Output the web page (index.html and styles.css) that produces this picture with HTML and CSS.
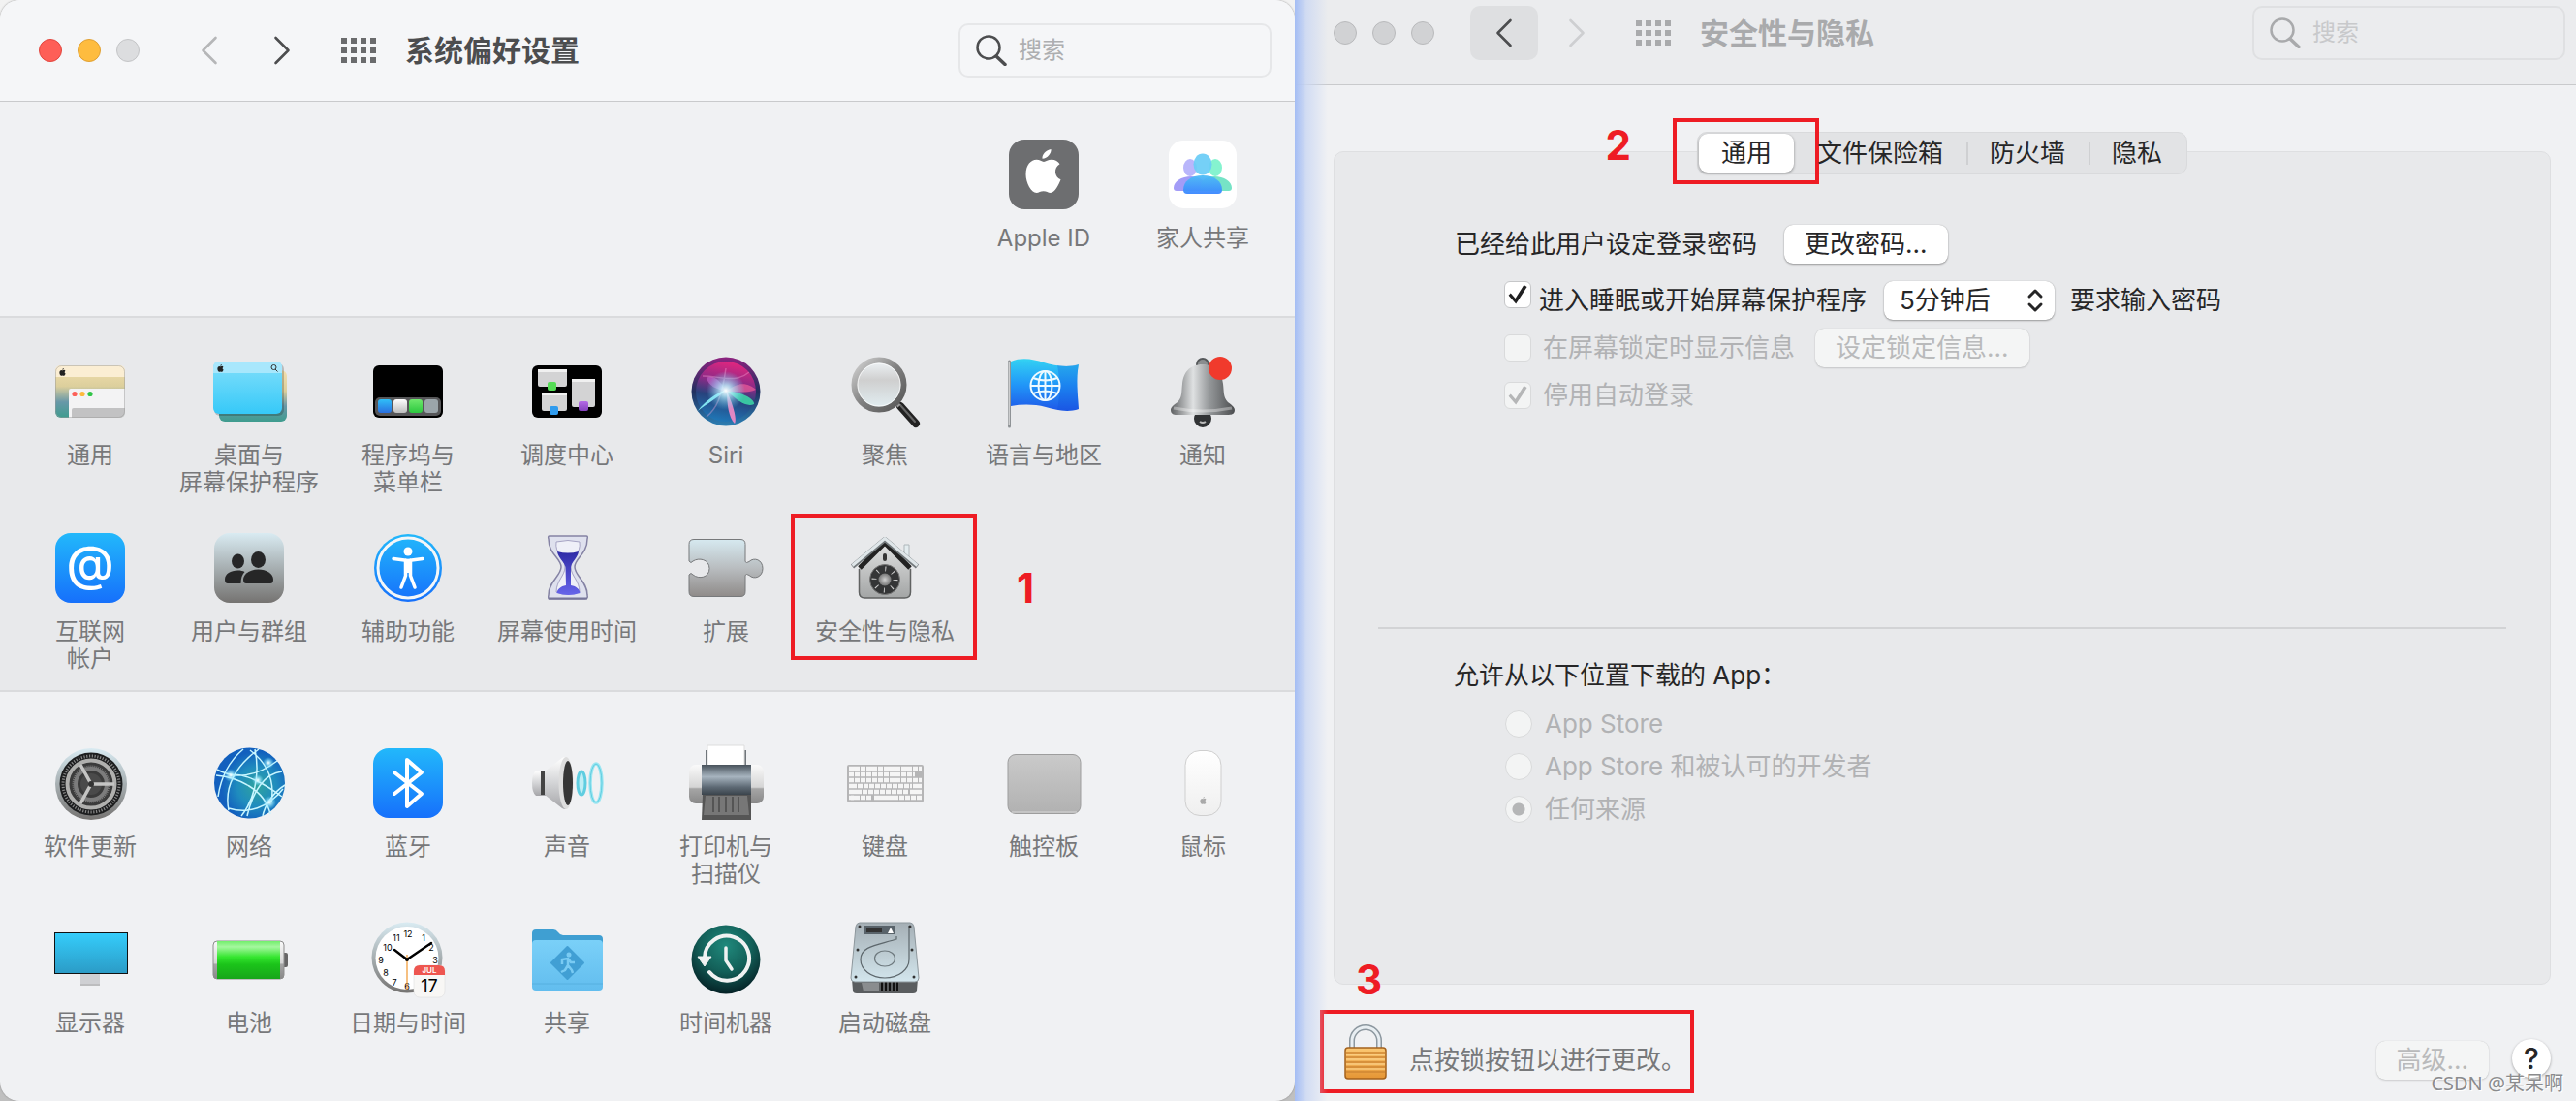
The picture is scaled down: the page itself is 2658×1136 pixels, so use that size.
FILE: index.html
```html
<!DOCTYPE html>
<html lang="zh-CN">
<head>
<meta charset="utf-8">
<meta name="viewport" content="width=device-width, initial-scale=1">
<title>系统偏好设置</title>
<link rel="stylesheet" href="styles.css">
</head>
<body>
<svg class="defs" width="0" height="0" aria-hidden="true">
  <defs>
    <linearGradient id="blue" x2="0" y2="1"><stop stop-color="#22b8fb"/><stop offset="1" stop-color="#1670fb"/></linearGradient>
    <linearGradient id="steel" x2="0" y2="1"><stop stop-color="#d9ebf2"/><stop offset="1" stop-color="#757371"/></linearGradient>
    <linearGradient id="puzzle" x2="0" y2="1"><stop stop-color="#d6e9f0"/><stop offset=".5" stop-color="#b9bdc0"/><stop offset="1" stop-color="#8f8b89"/></linearGradient>
    <linearGradient id="dune" x2="0" y2="1"><stop stop-color="#f3dfae"/><stop offset=".4" stop-color="#dccf9c"/><stop offset=".7" stop-color="#6898a8"/><stop offset="1" stop-color="#3e9c8e"/></linearGradient>
    <linearGradient id="sky" x2="0" y2="1"><stop stop-color="#82dffb"/><stop offset="1" stop-color="#36c9f8"/></linearGradient>
    <linearGradient id="dockblue" x2="0" y2="1"><stop stop-color="#2fc0f8"/><stop offset="1" stop-color="#2b6fe0"/></linearGradient>
    <linearGradient id="white" x2="0" y2="1"><stop stop-color="#fff"/><stop offset="1" stop-color="#bdbdbd"/></linearGradient>
    <linearGradient id="green" x2="0" y2="1"><stop stop-color="#6fe86c"/><stop offset="1" stop-color="#2bc83e"/></linearGradient>
    <linearGradient id="purple" x2="0" y2="1"><stop stop-color="#b56be6"/><stop offset="1" stop-color="#8442bd"/></linearGradient>
    <linearGradient id="flag" x2="0" y2="1"><stop stop-color="#33d2f3"/><stop offset=".5" stop-color="#2196f8"/><stop offset="1" stop-color="#1f58e8"/></linearGradient>
    <linearGradient id="bell"><stop stop-color="#5e6062"/><stop offset=".35" stop-color="#dfe1e2"/><stop offset=".6" stop-color="#96999b"/><stop offset="1" stop-color="#4b4d4f"/></linearGradient>
    <linearGradient id="glass" x2="0" y2="1"><stop stop-color="#eef3f6"/><stop offset=".4" stop-color="#cfcfcf"/><stop offset="1" stop-color="#e2eef2"/></linearGradient>
    <linearGradient id="ring" x2="1" y2="1"><stop stop-color="#d4d4d4"/><stop offset=".5" stop-color="#808080"/><stop offset="1" stop-color="#555"/></linearGradient>
    <linearGradient id="siririm" x2="0" y2="1"><stop stop-color="#8d2380"/><stop offset=".5" stop-color="#20305f"/><stop offset="1" stop-color="#2c7fb4"/></linearGradient>
    <linearGradient id="siri" x1=".6" x2=".4" y2="1"><stop stop-color="#e3267f"/><stop offset=".35" stop-color="#8c2a86"/><stop offset=".6" stop-color="#27427c"/><stop offset="1" stop-color="#1f78b8"/></linearGradient>
    <radialGradient id="glow"><stop stop-color="#fff"/><stop offset=".3" stop-color="#bdf3ff" stop-opacity=".8"/><stop offset="1" stop-color="#6ad8ff" stop-opacity="0"/></radialGradient>
    <linearGradient id="house" x2="0" y2="1"><stop stop-color="#e2e3e3"/><stop offset="1" stop-color="#a3a5a5"/></linearGradient>
    <radialGradient id="knob"><stop stop-color="#d0d0d0"/><stop offset="1" stop-color="#777"/></radialGradient>
    <radialGradient id="netball" cx=".6" cy=".55"><stop stop-color="#2fa39f"/><stop offset=".55" stop-color="#1f8cbe"/><stop offset="1" stop-color="#1260be"/></radialGradient>
    <linearGradient id="cone" x2="0" y2="1"><stop stop-color="#fff"/><stop offset=".5" stop-color="#d3d4d6"/><stop offset="1" stop-color="#a5a5a8"/></linearGradient>
    <linearGradient id="roller" x2="0" y2="1"><stop stop-color="#48525b"/><stop offset=".4" stop-color="#a7b4bf"/><stop offset=".75" stop-color="#5d6974"/><stop offset="1" stop-color="#3b444c"/></linearGradient>
    <linearGradient id="cap" x2="0" y2="1"><stop stop-color="#fafafa"/><stop offset=".58" stop-color="#d5d5d5"/><stop offset=".62" stop-color="#a5a5a5"/><stop offset="1" stop-color="#888"/></linearGradient>
    <linearGradient id="pad" x2="0" y2="1"><stop stop-color="#cacaca"/><stop offset="1" stop-color="#b1b1b1"/></linearGradient>
    <linearGradient id="mouse" x2="0" y2="1"><stop stop-color="#fff"/><stop offset="1" stop-color="#efefef"/></linearGradient>
    <linearGradient id="screen" x2="0" y2="1"><stop stop-color="#35cdfb"/><stop offset="1" stop-color="#2b9bc6"/></linearGradient>
    <linearGradient id="cell" x2="0" y2="1"><stop stop-color="#72ee6c"/><stop offset=".15" stop-color="#a5f79f"/><stop offset=".42" stop-color="#35e62f"/><stop offset=".62" stop-color="#1bc41a"/><stop offset="1" stop-color="#17a51a"/></linearGradient>
    <linearGradient id="folder" x2="0" y2="1"><stop stop-color="#7ad0f8"/><stop offset="1" stop-color="#62bdee"/></linearGradient>
    <radialGradient id="teal" cy=".3" r=".75"><stop stop-color="#20897c"/><stop offset=".5" stop-color="#136059"/><stop offset="1" stop-color="#03181e"/></radialGradient>
    <linearGradient id="disk" x2="0" y2="1"><stop stop-color="#a5afb5"/><stop offset="1" stop-color="#d3e6ed"/></linearGradient>
    <linearGradient id="sand" x2="0" y2="1"><stop stop-color="#2f2ba6"/><stop offset="1" stop-color="#6664ea"/></linearGradient>
    <linearGradient id="brass" x2="0" y2="1"><stop stop-color="#fbc873"/><stop offset="1" stop-color="#e59534"/></linearGradient>
    <linearGradient id="people" x2="0" y2="1"><stop stop-color="#4ebdf5"/><stop offset="1" stop-color="#3a86ff"/></linearGradient>
    <symbol id="apple" viewBox="0 0 36 46">
      <path d="M26 0c.5 4-3.700 9.600-9 9.700C16.400 5.500 21 .7 26 0z"/>
      <path d="M18.500 13c2-.3 4.500-2.300 8-2.300 3.800 0 6.900 2 8.500 4.500-6.500 3.800-5.800 13.200 1 16.100C34.200 36.500 29.800 45 25.500 45c-2.800 0-4-1.700-7.300-1.700S13.500 45 11 45C5.500 45 0 34.500 0 26c0-10 5.500-15.200 11-15.200 3.400 0 5.500 2 7.500 2.200z"/>
    </symbol>
    <symbol id="chev" viewBox="0 0 18 30"><path d="M15.500 2 2.500 15l13 13" fill="none" stroke="currentColor" stroke-width="2.600" stroke-linecap="round" stroke-linejoin="round"/></symbol>
    <symbol id="dots" viewBox="0 0 36 26"><path d="M0 3h36M0 13h36M0 23h36" fill="none" stroke="currentColor" stroke-width="6" stroke-dasharray="6 4"/></symbol>
    <symbol id="lens" viewBox="0 0 32 32"><circle cx="13" cy="13" r="11.500" fill="none" stroke="currentColor" stroke-width="2.500"/><path d="m21 22 9 8.500" stroke="currentColor" stroke-width="3.500" stroke-linecap="round"/></symbol>
  </defs>
</svg>

<div class="desktop">
  <div class="stage">
    <div class="window window--prefs">
      <header class="titlebar">
        <div class="lights"><span class="light light--red"></span><span class="light light--amber"></span><span class="light"></span></div>
        <button class="nav nav--faint" aria-label="后退"><svg width="18" height="30"><use href="#chev"/></svg></button>
        <button class="nav nav--flip" aria-label="前进"><svg width="18" height="30"><use href="#chev"/></svg></button>
        <button class="all" aria-label="全部显示"><svg width="36" height="26"><use href="#dots"/></svg></button>
        <h1 class="title">系统偏好设置</h1>
        <label class="search"><svg width="32" height="32"><use href="#lens"/></svg><input type="search" placeholder="搜索" aria-label="搜索"></label>
      </header>

      <section class="group group--account">
        <button class="item item--seventh"><svg class="icon" viewBox="0 0 72 72"><rect width="72" height="72" rx="16" fill="#6d6e70"/><use href="#apple" x="17" y="10" width="37" height="46" fill="#fff"/></svg><span>Apple ID</span></button>
        <button class="item"><svg class="icon" viewBox="0 0 72 72"><rect x="1" y="1" width="70" height="70" rx="15" fill="#fff"/><ellipse cx="23" cy="29" rx="7" ry="9" fill="#b9b6fb"/><ellipse cx="49" cy="29" rx="7" ry="9" fill="#85f3cf"/><path d="M6 50c0-7 8-12 18-12s15 5 15 15H9q-3 0-3-3z" fill="#a39cf7"/><path d="M66 50c0-7-8-12-18-12s-15 5-15 15h30q3 0 3-3z" fill="#76e3c6"/><ellipse cx="36" cy="25.500" rx="9.500" ry="11" fill="#6accf6" opacity=".93"/><path d="M16 52c0-9 8-15 20-15s20 6 20 15q0 4-4 4H20q-4 0-4-4z" fill="url(#people)" opacity=".95"/></svg><span>家人共享</span></button>
      </section>

      <section class="group group--personal">
        <button class="item"><svg class="icon" viewBox="0 0 72 72"><rect y="9" width="72" height="54" rx="6" fill="url(#dune)"/><path d="M0 21v-6q0-6 6-6h60q6 0 6 6v6z" fill="#fbeed3"/><use href="#apple" x="4" y="12" width="7" height="8" fill="#222"/><path d="M14 63V35q0-2 2-2h56v24q0 6-6 6z" fill="#f3f3f4"/><path d="M17 63v-8q0-2 2-2h53v4q0 6-6 6z" fill="#c2c2c3"/><circle cx="20" cy="38.500" r="2.600" fill="#fc6058"/><circle cx="28" cy="38.500" r="2.600" fill="#fdb93c"/><circle cx="36" cy="38.500" r="2.600" fill="#31c548"/><rect x=".5" y="9.500" width="71" height="53" rx="6" fill="none" stroke="#999" stroke-opacity=".5"/></svg><span>通用</span></button>
        <button class="item"><svg class="icon" viewBox="0 0 72 72"><rect x="5" y="14" width="70" height="53" rx="6" fill="url(#dune)"/><rect x="0" y="7" width="72" height="54" rx="6" fill="#000" opacity=".2"/><rect x="-1" y="5" width="71" height="54" rx="6" fill="url(#sky)"/><path d="M-1 17v-6q0-6 6-6h59q6 0 6 6v6z" fill="#a8e7fc"/><use href="#apple" x="3" y="8" width="7" height="8" fill="#222"/><circle cx="61.500" cy="11" r="2.500" fill="none" stroke="#333"/><path d="m63 13 2.500 2.500" stroke="#333"/></svg><span>桌面与<br>屏幕保护程序</span></button>
        <button class="item"><svg class="icon" viewBox="0 0 72 72"><rect y="9" width="72" height="54" rx="6"/><rect x="2" y="42" width="68" height="19" rx="5" fill="#565658"/><rect x="5" y="44" width="14" height="14" rx="3" fill="url(#dockblue)"/><rect x="21" y="44" width="14" height="14" rx="3" fill="url(#white)"/><rect x="37" y="44" width="14" height="14" rx="3" fill="url(#green)"/><rect x="53" y="44" width="14" height="14" rx="3" fill="#9ba5aa"/></svg><span>程序坞与<br>菜单栏</span></button>
        <button class="item"><svg class="icon" viewBox="0 0 72 72"><rect y="9" width="72" height="54" rx="6"/><g fill="#d3d3d4"><rect x="6" y="13" width="30" height="18" rx="2"/><rect x="10" y="37" width="26" height="19" rx="2"/><rect x="41" y="23" width="24" height="29" rx="2"/></g><path d="M6 14.500h30M10 38.500h26M41 24.500h24" stroke="#f0f0f0" stroke-width="3"/><rect x="16" y="26" width="9" height="9" rx="2" fill="#55dc55"/><rect x="18" y="51" width="9" height="9" rx="2" fill="#2f9bee"/><rect x="48" y="46" width="10" height="10" rx="2" fill="url(#purple)"/></svg><span>调度中心</span></button>
        <button class="item"><svg class="icon" viewBox="0 0 72 72"><circle cx="36" cy="36" r="35.500" fill="url(#siririm)"/><circle cx="36" cy="36" r="31" fill="url(#siri)"/><path d="M36 36c14-12 24-8 31-2-8 4-20 2-31 2z" fill="#f05d9a" opacity=".7"/><path d="M36 35C30 24 22 18 16 22c2 8 10 12 20 13z" fill="#c86bd0" opacity=".6"/><path d="M38 36c14 0 28 8 27 13-7 4-18-4-27-13z" fill="#3ddca8" opacity=".85"/><path d="M37 36c5 10 11 28 8 33-6-6-8-20-8-33z" fill="#f58bc6" opacity=".9"/><path d="M36 34C26 38 14 46 7 56c10-8 22-14 29-22z" fill="#8df3fb" opacity=".9"/><path d="M12 20c18 0 34 8 48-4M16 62c10-8 16-20 20-50" fill="none" stroke="#ffb0e0" stroke-opacity=".35" stroke-width="1.500"/><circle cx="36" cy="35" r="20" fill="url(#glow)"/></svg><span>Siri</span></button>
        <button class="item"><svg class="icon" viewBox="0 0 72 72"><path d="m52 51 16 18" stroke="#222" stroke-width="8" stroke-linecap="round"/><path d="m52 50 15 17" stroke="#666" stroke-width="2" stroke-linecap="round"/><path d="m46 46 5 5" stroke="#999" stroke-width="4"/><circle cx="30" cy="29" r="24" fill="url(#glass)"/><circle cx="30" cy="29" r="25.500" fill="none" stroke="url(#ring)" stroke-width="6"/><circle cx="30" cy="29" r="22" fill="none" stroke="#fff" stroke-opacity=".7"/></svg><span>聚焦</span></button>
        <button class="item"><svg class="icon" viewBox="0 0 72 72"><path d="M2 5c12-5 24-2 34 1s24 6 36 2c-3 15-1 30 0 46-12 4-22 1-34-2S14 49 2 51z" fill="url(#flag)"/><path d="M50 9c8 1 14 1 22-1-3 15-1 30 0 46-8 2-14 2-22 1 3-15 3-31 0-46z" fill="#0c4fd8" opacity=".25"/><path d="M.5 5v67" stroke="#8f9396" stroke-width="3" stroke-linecap="round"/><path d="M.2 6v65" stroke="#e8e8e8"/><g fill="none" stroke="#eefaff" stroke-width="2"><circle cx="37.500" cy="30" r="15"/><ellipse cx="37.500" cy="30" rx="7" ry="15"/><path d="M37.500 15v30M22.500 30h30M25 22q12.500 5 25 0M25 38q12.500-5 25 0"/></g></svg><span>语言与地区</span></button>
        <button class="item"><svg class="icon" viewBox="0 0 72 72"><circle cx="36" cy="64" r="9" fill="#303234"/><circle cx="36" cy="8" r="6" fill="#8a8d8f" stroke="#55585a" stroke-width="2"/><path d="M36 8c14 0 20 9 21 20 1 8 0 14 5 19 4 3 7 5 7 8 0 4-3 5-6 5H9c-3 0-6-1-6-5 0-3 3-5 7-8 5-5 4-11 5-19C16 17 22 8 36 8z" fill="url(#bell)"/><path d="M6 53q30 6 60 0" fill="none" stroke="#fff" stroke-opacity=".35" stroke-width="3"/><path d="M33 67q3 2 6 0" stroke="#bbb" stroke-width="2" fill="none"/><circle cx="54" cy="12" r="12" fill="#f03a2c"/></svg><span>通知</span></button>

        <button class="item"><svg class="icon" viewBox="0 0 72 72"><rect width="72" height="72" rx="16" fill="url(#blue)"/><text class="at" x="36" y="49" text-anchor="middle">@</text></svg><span>互联网<br>帐户</span></button>
        <button class="item"><svg class="icon" viewBox="0 0 72 72"><rect width="72" height="72" rx="16" fill="url(#steel)"/><g fill="#262627"><ellipse cx="24.500" cy="29" rx="6.500" ry="7.500"/><path d="M11 48c0-6 6-9.500 13.500-9.500 3 0 5 .5 7 1.500q-4 4-4 12H14q-3 0-3-4z"/><ellipse cx="45.500" cy="27.500" rx="7.500" ry="8.500"/><path d="M30 48c0-6 7-10.500 15.500-10.500S61 42 61 48q0 4-3 4H33q-3 0-3-4z"/></g></svg><span>用户与群组</span></button>
        <button class="item"><svg class="icon" viewBox="0 0 72 72"><circle cx="36" cy="36" r="35" fill="url(#blue)"/><circle cx="36" cy="36" r="31" fill="none" stroke="#f3f6f8" stroke-width="3"/><circle cx="36" cy="19" r="4.500" fill="#fff"/><path d="M21 26.500l15 2 15-2M33.500 28v16l-4.500 12M38.500 28v16L43 56" fill="none" stroke="#fff" stroke-width="3.500" stroke-linecap="round" stroke-linejoin="round"/><path d="M32 27h8v14h-8z" fill="#fff"/></svg><span>辅助功能</span></button>
        <button class="item"><svg class="icon" viewBox="0 0 72 72"><path d="M18 3h38q2 0 1 3c0 16-13 20-13 29s13 15 13 29q1 4-2 4H18q-2 0-1-4c0-14 13-20 13-29S17 22 17 6q-1-3 1-3z" fill="#dfe1ee" stroke="#8583a4" stroke-width="1.500"/><path d="M25 9q12-3 24 0c2 12-9 17-9 26s9 14 9 26q-12 5-24 0c0-12 9-17 9-26S23 21 25 9z" fill="#eff0f8" stroke="#a6a4c4"/><path d="M26 19q11 3 22 0c-1 7-7 10-8 16L40 54c6 1 9 4 9.500 8q-12 4-24 0c.5-4 4-7 9.500-8l-.5-19C33 29 27 26 26 19z" fill="url(#sand)"/><path d="M17 67.500h40" stroke="#77769a" stroke-width="2"/></svg><span>屏幕使用时间</span></button>
        <button class="item"><svg class="icon" viewBox="0 0 72 72"><path d="M3 6.500h48q5 0 5 5v18q1 2 4 0c5-5 14-2 14 7s-9 12-14 7q-3-2-4 0v17q0 5-5 5H3q-5 0-5-5V43q2-3 4 0c6 5 17 3 17-6.500S8 25 2 29q-2 3-4 0V11.500q0-5 5-5z" fill="url(#puzzle)" stroke="#77797b"/></svg><span>扩展</span></button>
        <button class="item item--marked"><svg class="icon" viewBox="0 0 72 72"><path d="M56 12h5v18h-5z" fill="#e3ecef" stroke="#aeb6ba"/><path d="M9 33 36 9l27 24v28q0 6-6 6H15q-6 0-6-6z" fill="url(#house)"/><path d="M9.500 37v24q0 6 6 6h41q6 0 6-6V37" fill="none" stroke="#606262" stroke-width="1.500"/><path d="m10 36 26-26 26 26" fill="none" stroke="#222" stroke-width="5"/><path d="m2.500 34.500 33.500-28 33.500 28" fill="none" stroke="#73797c" stroke-width="5" stroke-linejoin="round"/><path d="m2.500 33.500 33.500-28 33.500 28" fill="none" stroke="#dfe6e9" stroke-width="3" stroke-linejoin="round"/><rect x="34" y="21" width="4" height="8" rx="2" fill="#333"/><circle cx="36" cy="48" r="15.500" fill="#343536" stroke="#777"/><circle cx="36" cy="48" r="11" fill="none" stroke="#ccc" stroke-width="5" stroke-dasharray="1 7.640"/><circle cx="36" cy="48" r="6.500" fill="url(#knob)"/></svg><span>安全性与隐私</span><i class="mark mark--item"></i><b class="step step--one">1</b></button>
      </section>

      <section class="group group--hardware">
        <button class="item"><svg class="icon" viewBox="0 0 72 72"><circle cx="37" cy="37" r="37" fill="url(#steel)"/><circle cx="37" cy="37" r="32.500" fill="#1d1e1f"/><circle cx="37" cy="37" r="29" fill="none" stroke="#888" stroke-width="3" stroke-dasharray="1.200 1.600"/><circle cx="37" cy="37" r="24.500" fill="#3b3b3b" stroke="#b0b0ae" stroke-width="4"/><circle cx="37" cy="37" r="16" fill="none" stroke="#7c7c7c" stroke-width="4"/><circle cx="37" cy="37" r="18.500" fill="none" stroke="#7c7c7c" stroke-width="2" stroke-dasharray="1 1"/><circle cx="37" cy="37" r="11" fill="#4a4a4a"/><path d="M37 37h24M37 37 26 17M37 37 26 57" stroke="#c5c5c4" stroke-width="3.500"/><circle cx="37" cy="37" r="3" fill="#333"/></svg><span>软件更新</span></button>
        <button class="item"><svg class="icon" viewBox="0 0 72 72"><circle cx="36.500" cy="36" r="36.500" fill="url(#netball)"/><g fill="none" stroke="#c8f6ff" stroke-width="1.500"><path d="M3 22c18 10 40 8 62-9M46 1C22 18 10 40 15 64M2 28c22 2 50 14 56 40M37 2c16 12 26 30 22 54M28 70C40 55 48 30 42 1M70 24C52 26 40 44 34 70M70 50c-16-12-40-26-53-22M73 38C60 46 52 60 50 70M15 62c20 6 40 0 56-20M4 50C6 36 12 16 30 1"/></g><circle cx="17" cy="28" r="7" fill="url(#glow)"/><circle cx="45" cy="33" r="6" fill="url(#glow)"/><circle cx="57" cy="56" r="7" fill="url(#glow)"/><circle cx="56" cy="15" r="6" fill="url(#glow)"/></svg><span>网络</span></button>
        <button class="item"><svg class="icon" viewBox="0 0 72 72"><rect width="72" height="72" rx="16" fill="url(#blue)"/><path d="m22 25 28 22-15 13V12l15 13-28 22" fill="none" stroke="#fff" stroke-width="4" stroke-linecap="round" stroke-linejoin="round"/></svg><span>蓝牙</span></button>
        <button class="item"><svg class="icon" viewBox="0 0 72 72"><path d="M4 23h12v26H4q-4-3-4-13t4-13z" fill="url(#cone)"/><path d="M9 24h6v24H9z" fill="#444"/><path d="M13 24 31 10q4-2 4 0v52q0 2-4 0L13 48z" fill="url(#cone)"/><ellipse cx="35" cy="36" rx="7.500" ry="27" fill="#ddd"/><ellipse cx="37" cy="36" rx="5" ry="23" fill="#363636"/><ellipse cx="51" cy="36" rx="4" ry="12" fill="#bfeef5" stroke="#5fcde0" stroke-width="3"/><ellipse cx="66" cy="36" rx="6" ry="20" fill="none" stroke="#9be6f2" stroke-width="3.500"/><ellipse cx="66" cy="36" rx="6" ry="20" fill="none" stroke="#5fcde0"/></svg><span>声音</span></button>
        <button class="item"><svg class="icon" viewBox="0 0 72 72"><path d="M15 2h42v18H15z" fill="#70767b"/><path d="M17-3h38v24H17z" fill="#fff" stroke="#ddd"/><rect x="-2" y="17" width="77" height="40" rx="7" fill="url(#cap)"/><path d="M12 48h50v26H11z" fill="#555"/><path d="M15 49h43l2 20H13z" fill="#777"/><path d="M23 50v16M29 50v16M36 50v16M43 50v16M49 50v16" stroke="#555" stroke-width="2"/><path d="M11 17h51v31H11z" fill="url(#roller)"/></svg><span>打印机与<br>扫描仪</span></button>
        <button class="item"><svg class="icon" viewBox="0 0 72 72"><rect x="-3" y="17" width="79" height="39" rx="2" fill="#b5b5b6"/><g stroke="#f5f5f5" stroke-width="4.500" fill="none"><path d="M-1 21h75" stroke-dasharray="11 1 5 1"/><path d="M-1 27h68" stroke-dasharray="5 1"/><path d="M-1 33h75M8 39h56" stroke-dasharray="5 1"/><path d="M-1 39h8M65 39h9M-1 45h13M62 45h12M1 51h4M25 51h25"/><path d="M13 45h48M-1 51h24M51 51h23" stroke-dasharray="5 1"/></g></svg><span>键盘</span></button>
        <button class="item"><svg class="icon" viewBox="0 0 72 72"><rect x="-1" y="6.500" width="75" height="61" rx="8" fill="url(#pad)" stroke="#9d9d9d"/><path d="M3 66h67" stroke="#d8d8d8"/></svg><span>触控板</span></button>
        <button class="item"><svg class="icon" viewBox="0 0 72 72"><rect x="18" y="2.500" width="37" height="67" rx="15" fill="url(#mouse)" stroke="#cfcfcf"/><use href="#apple" x="33" y="50" width="7" height="8" fill="#a9a9a9"/></svg><span>鼠标</span></button>

        <button class="item"><svg class="icon" viewBox="0 0 72 72"><path d="M26 51h20v12H26z" fill="#cfd0d3"/><path d="M26 62h20" stroke="#aaa"/><rect x="-.500" y="8.500" width="75" height="42" fill="url(#screen)" stroke="#111"/></svg><span>显示器</span></button>
        <button class="item"><svg class="icon" viewBox="0 0 72 72"><rect x="70" y="29" width="6" height="15" rx="2" fill="#666"/><rect x="-1" y="17" width="73" height="39" rx="4" fill="url(#cap)" stroke="#8d8d8d"/><rect x="3" y="17" width="65" height="39" fill="url(#cell)"/></svg><span>电池</span></button>
        <button class="item"><svg class="icon" viewBox="0 0 72 72"><circle cx="35" cy="34" r="36.500" fill="url(#steel)"/><circle cx="35" cy="34.500" r="32.500" fill="#fff"/><g class="numerals" text-anchor="middle"><text x="36" y="13">12</text><text x="52" y="17">1</text><text x="60" y="27">2</text><text x="64" y="40">3</text><text x="35" y="67">6</text><text x="22" y="63">7</text><text x="13" y="53">8</text><text x="8" y="40">9</text><text x="15" y="27">10</text><text x="24" y="17">11</text></g><path d="m35 36 25-17M35 36 22 26" stroke="#000" stroke-width="2.500" stroke-linecap="round"/><path d="M35 31v36" stroke="#f0962e" stroke-width="1.200"/><circle cx="35" cy="36" r="2"/><rect x="42" y="42" width="32" height="33" rx="6" fill="#f8f7f5" stroke="#d8d8d8" stroke-width=".5"/><path d="M42 52v-4q0-6 6-6h20q6 0 6 6v4z" fill="#ee5650"/><text class="month" x="58" y="50" text-anchor="middle">JUL</text><text class="day" x="58" y="70" text-anchor="middle">17</text></svg><span>日期与时间</span></button>
        <button class="item"><svg class="icon" viewBox="0 0 72 72"><path d="M0 30V9q0-4 4-4h18q3 0 5 3 2 3 5 3h37q4 0 4 4v15z" fill="#3f9fd2"/><path d="M0 20q0-4 4-4h65q4 0 4 4v44q0 4-4 4H4q-4 0-4-4z" fill="url(#folder)"/><path d="M0 61h73" stroke="#56b0e0" stroke-width="1"/><path d="M36.500 23 53 39.500 36.500 56 20 39.500z" fill="#419fd4" stroke="#419fd4" stroke-width="2" stroke-linejoin="round"/><circle cx="38" cy="31" r="2.500" fill="#7acbf3"/><path d="M31 41v-5l6-1v7l4 5 1 3M37 42l-3 5-4 2M38 36l2 3h4" fill="none" stroke="#7acbf3" stroke-width="2.500"/></svg><span>共享</span></button>
        <button class="item"><svg class="icon" viewBox="0 0 72 72"><circle cx="36" cy="36" r="35.500" fill="url(#teal)"/><path d="M14 34a23 23 0 1 1 5 15" fill="none" stroke="#f0f2f2" stroke-width="4" stroke-linecap="round"/><path d="M7 33h14l-7 10z" fill="#f0f2f2" stroke="#f0f2f2" stroke-linejoin="round"/><path d="M36 24v13l6 9" fill="none" stroke="#f0f2f2" stroke-width="3.500" stroke-linecap="round" stroke-linejoin="round"/></svg><span>时间机器</span></button>
        <button class="item"><svg class="icon" viewBox="0 0 72 72"><path d="M2 56h68l-1 12q0 3-4 3H7q-4 0-4-3z" fill="#5a5d5f"/><path d="M12 60h18v9H14z" fill="#8a8d8f"/><path d="M33 59v9M37 59v9M41 59v9M45 59v9M49 59v9" stroke="#111" stroke-width="2"/><path d="M10-2h52q3 0 4 4l5 53q0 4-4 4H5q-4 0-4-4L6 2q1-4 4-4z" fill="url(#disk)" stroke="#8d979c"/><path d="M15 1h32v9H15z" fill="#59636a"/><path d="M17 3h16v5H17z" fill="#333"/><path d="M39 9l3-6 3 6z" fill="#fff"/><path d="M61 1v35a25 19 0 0 1-50 0c0-14 18-15 37-21v-3" fill="none" stroke="#5d676c" stroke-width="1.200"/><ellipse cx="36" cy="35" rx="10.500" ry="8" fill="none" stroke="#6d787d" stroke-width="1.200"/><g fill="#333"><circle cx="10" cy="2" r="1.500"/><circle cx="62" cy="2" r="1.500"/><circle cx="8" cy="26" r="1.500"/><circle cx="64" cy="26" r="1.500"/><circle cx="6" cy="54" r="1.500"/><circle cx="66" cy="54" r="1.500"/></g></svg><span>启动磁盘</span></button>
      </section>
    </div>
  </div>

  <div class="window window--security">
    <header class="titlebar titlebar--inactive">
      <div class="lights"><span class="light light--idle"></span><span class="light light--idle"></span><span class="light light--idle"></span></div>
      <button class="nav nav--pressed" aria-label="后退"><svg width="18" height="30"><use href="#chev"/></svg></button>
      <button class="nav nav--flip nav--faint" aria-label="前进"><svg width="18" height="30"><use href="#chev"/></svg></button>
      <button class="all" aria-label="全部显示"><svg width="36" height="26"><use href="#dots"/></svg></button>
      <h2 class="title">安全性与隐私</h2>
      <label class="search"><svg width="32" height="32"><use href="#lens"/></svg><input type="search" placeholder="搜索" aria-label="搜索"></label>
    </header>

    <main class="content">
      <div class="panel">
        <div class="tabs" role="tablist">
          <button class="tab tab--active" role="tab" aria-selected="true">通用<i class="mark mark--tab"></i><b class="step step--two">2</b></button>
          <button class="tab" role="tab">文件保险箱</button>
          <button class="tab tab--ruled" role="tab">防火墙</button>
          <button class="tab tab--ruled" role="tab">隐私</button>
        </div>
        <div class="login">
          <div class="row row--wide"><span>已经给此用户设定登录密码</span><button class="push">更改密码...</button></div>
          <div class="checks">
            <div class="row">
              <input class="box box--raised" type="checkbox" id="sleep" checked>
              <label class="tight" for="sleep">进入睡眠或开始屏幕保护程序</label>
              <span class="select"><select aria-label="要求输入密码的时间"><option>5分钟后</option></select><svg width="16" height="24" viewBox="0 0 16 24"><path d="m2 8 6-6 6 6M2 16l6 6 6-6" fill="none" stroke="currentColor" stroke-width="3" stroke-linecap="round" stroke-linejoin="round"/></svg></span>
              <span>要求输入密码</span>
            </div>
            <div class="row row--off">
              <input class="box" type="checkbox" id="message" disabled>
              <label for="message">在屏幕锁定时显示信息</label>
              <button class="push push--after" disabled>设定锁定信息...</button>
            </div>
            <div class="row row--off">
              <input class="box" type="checkbox" id="auto" checked disabled>
              <label for="auto">停用自动登录</label>
            </div>
          </div>
        </div>
        <fieldset class="sources">
          <legend class="sources__title">允许从以下位置下载的 App：</legend>
          <label class="radio"><input type="radio" name="source" disabled>App Store</label>
          <label class="radio"><input type="radio" name="source" disabled>App Store 和被认可的开发者</label>
          <label class="radio"><input type="radio" name="source" checked disabled>任何来源</label>
        </fieldset>
      </div>
      <footer class="footer">
        <div class="unlock">
          <button class="lock" aria-label="锁"><svg width="44" height="56" viewBox="0 0 44 56"><path d="M8 26V16a14 14 0 0 1 28 0v10" fill="none" stroke="#8c979f" stroke-width="6"/><path d="M8 26V16a14 14 0 0 1 28 0v10" fill="none" stroke="#e8eef2" stroke-width="3"/><rect x="1" y="23" width="42" height="32" rx="3" fill="url(#brass)" stroke="#a4611c" stroke-width="1.500"/><path d="M2 28h40M2 33h40M2 38h40M2 43h40M2 48h40" stroke="#cf8733" stroke-width="1.500"/><path d="M2 30h40M2 35h40M2 40h40M2 45h40" stroke="#ffdc9a"/></svg></button>
          <span>点按锁按钮以进行更改。</span>
          <i class="mark mark--lock"></i><b class="step step--three">3</b>
        </div>
        <button class="push push--advanced" disabled>高级...</button>
        <button class="help" aria-label="帮助">?</button>
      </footer>
    </main>
    <span class="watermark">CSDN @某呆啊</span>
  </div>
</div>
</body>
</html>
```
FILE: styles.css
```css
* {
  box-sizing: border-box;
}

body {
  margin: 0;
  color: #262627;
  background: #f0f1f3;
  font-family: Inter, "Noto Sans CJK SC", sans-serif;
  font-size: 26px;
  line-height: 30px;
}

button,
input,
select {
  margin: 0;
  padding: 0;
  border: 0;
  background: none;
  color: inherit;
  font: inherit;
}

svg {
  display: block;
  flex: none;
  overflow: visible;
}

.defs {
  position: absolute;
}

.desktop {
  display: grid;
  grid-template-columns: 1336fr 1322fr;
  min-height: 100vh;
}

.stage {
  position: relative;
  z-index: 1;
  display: flex;
  background: linear-gradient(#f2f2f2, #e4e4e4 50%, #bfbfbf);
}

/* Focus glow along the right edge of the front window */
.stage::after {
  content: "";
  position: absolute;
  top: 0;
  bottom: 0;
  left: 100%;
  width: 34px;
  background: linear-gradient(90deg, #a4bdf4, #cad7f3cc 35%, #dfe6f500);
}

.window {
  display: flex;
  flex-direction: column;
  flex: 1;
  min-width: 0;
}

.window--prefs {
  overflow: hidden;
  border-radius: 20px;
  background: #f0f1f3;
  box-shadow: 0 0 2px #888;
}

.window--security {
  position: relative;
}

/* Title bars */
.titlebar {
  display: flex;
  align-items: center;
  padding: 24px 24px 24px 40px;
  border-bottom: 1px solid #c9cacc;
  background: #f5f6f8;
  color: #4c4d4f;
}

.titlebar--inactive {
  padding: 6px 11px 25px 40px;
  background: #ebecee;
  color: #a9aaac;
}

.lights {
  display: flex;
  gap: 16px;
  margin-right: 37px;
}

.light {
  width: 24px;
  height: 24px;
  border: 1px solid #c4c5c7;
  border-radius: 50%;
  background: #dcdddf;
}

.light--red {
  border-color: #e2463f;
  background: #fe5f57;
}

.light--amber {
  border-color: #e0a033;
  background: #febc3f;
}

.light--idle {
  border-color: #b9babc;
  background: #d1d2d4;
}

.nav {
  display: grid;
  place-items: center;
  width: 70px;
  height: 56px;
  margin-right: 5px;
  border-radius: 10px;
}

.nav--faint {
  color: #b5b6b8;
}

.titlebar--inactive .nav--faint {
  color: #cecfd1;
}

.nav--flip svg {
  transform: scaleX(-1);
}

.nav--pressed {
  background: #dedfe1;
  color: #4c4d4f;
}

.all {
  margin: 0 30px 0 21px;
  color: #6a6b6d;
}

.titlebar--inactive .all {
  color: #a9aaac;
}

.title {
  flex: 1;
  margin: 0;
  font-size: 30px;
  line-height: 36px;
  font-weight: 700;
}

.search {
  display: flex;
  align-items: center;
  gap: 12px;
  width: 323px;
  height: 56px;
  padding: 0 16px;
  border: 2px solid #e6e7e9;
  border-radius: 10px;
}

.titlebar--inactive .search {
  border-color: #dfe0e2;
}

.search input {
  flex: 1;
  min-width: 0;
  outline: 0;
  font-size: 24px;
}

.search input::placeholder {
  color: #adaeb0;
}

.titlebar--inactive .search input::placeholder {
  color: #c8c9cb;
}

/* Preference groups */
.group {
  display: grid;
  grid-template-columns: repeat(8, 1fr);
  align-items: start;
  row-gap: 38px;
  padding: 0 13px 0 11px;
}

.group--account {
  padding-top: 39px;
  padding-bottom: 66px;
  border-bottom: 2px solid #dadbdd;
}

.group--personal {
  padding-top: 40px;
  padding-bottom: 18px;
  border-bottom: 2px solid #dadbdd;
  background: #e8e9eb;
}

.group--hardware {
  padding-top: 58px;
}

.item {
  position: relative;
  display: flex;
  flex-direction: column;
  align-items: center;
  gap: 16px;
  color: #77787a;
  font-size: 24px;
  line-height: 28px;
}

.item > span {
  white-space: nowrap;
}

.item--seventh {
  grid-column-start: 7;
}

.icon {
  width: 72px;
  height: 72px;
}

.at {
  fill: #fff;
  font-size: 50px;
  font-weight: 500;
}

.numerals {
  font-size: 9px;
}

.month {
  fill: #fff;
  font-size: 8px;
  font-weight: 600;
}

.day {
  font-size: 18px;
}

/* Numbered callouts */
.mark {
  position: absolute;
  border: 4px solid #ee1c24;
  pointer-events: none;
}

.mark--item {
  inset: -20px -13px -15px -15px;
}

.mark--tab {
  inset: -16px -26px -12px -27px;
}

.mark--lock {
  inset: -16px -8px -14px -25px;
}

.step {
  position: absolute;
  color: #ee1c24;
  font-size: 42px;
  line-height: 50px;
  font-weight: 700;
}

.step--one {
  top: 32px;
  left: calc(100% + 54px);
}

.step--two {
  top: -13px;
  right: calc(100% + 70px);
}

.step--three {
  top: -72px;
  left: 12px;
}

/* Security pane */
.content {
  display: flex;
  flex: 1;
  flex-direction: column;
  padding: 68px 26px 0 40px;
}

.panel {
  display: flex;
  flex: 1;
  flex-direction: column;
  border: 1px solid #dedfe1;
  border-radius: 10px;
  background: #e8e9eb;
}

.tabs {
  display: flex;
  align-self: center;
  height: 44px;
  margin-top: -21px;
  padding: 1px;
  border: 1px solid #d9dadc;
  border-radius: 10px;
  background: #e2e3e5;
}

.tab {
  position: relative;
  display: flex;
  align-items: center;
  padding: 0 24px;
}

.tab--active {
  padding: 0 23px;
  border-radius: 9px;
  background: #fff;
  box-shadow: 0 1px 3px #0006;
}

.tab--ruled::before {
  content: "";
  position: absolute;
  top: 8px;
  bottom: 8px;
  left: 0;
  width: 2px;
  background: #cfd0d2;
}

.login {
  flex: 1;
  padding: 52px 0 0 124px;
}

.row {
  display: flex;
  align-items: center;
  height: 40px;
  white-space: nowrap;
}

.row--wide {
  gap: 28px;
}

.row--off {
  color: #b1b2b4;
}

.checks {
  display: flex;
  flex-direction: column;
  gap: 9px;
  margin: 18px 0 0 51px;
}

.push {
  height: 40px;
  padding: 0 21px;
  border-radius: 9px;
  background: #fff;
  box-shadow: 0 1px 2px #0005, 0 0 1px #0004;
}

.push:disabled {
  background: #f4f5f5;
  color: #b9babb;
  box-shadow: 0 1px 2px #0002, 0 0 1px #0003;
}

.push--after {
  margin-left: 21px;
}

.box {
  flex: none;
  appearance: none;
  width: 28px;
  height: 28px;
  margin-right: 12px;
  border: 1px solid #c6c7c9;
  border-radius: 6px;
  background: #fff;
}

.box--raised {
  align-self: flex-start;
  margin-right: 8px;
}

.box:disabled {
  border-color: #d9dadb;
  background: #f3f4f4;
}

.box:checked::before {
  content: "";
  display: block;
  width: 20px;
  height: 20px;
  margin: 3px;
  background: #202021;
  clip-path: polygon(3% 54%, 14% 43%, 38% 70%, 82% 0, 98% 10%, 41% 98%);
}

.box:disabled:checked::before {
  background: #b5b6b7;
}

.tight {
  margin-right: 18px;
}

.select {
  position: relative;
  margin-right: 16px;
}

.select select {
  appearance: none;
  display: block;
  width: 176px;
  height: 40px;
  padding: 0 16px;
  border-radius: 9px;
  background: #fff;
  box-shadow: 0 1px 2px #0005, 0 0 1px #0004;
}

.select svg {
  position: absolute;
  top: 8px;
  right: 12px;
  pointer-events: none;
}

.sources {
  min-width: 0;
  margin: 0 45px;
  padding: 33px 0 158px 78px;
  border: 0;
  border-top: 2px solid #d2d3d5;
}

.sources__title {
  float: left;
  width: 100%;
  margin-bottom: 13px;
  padding: 0;
}

.radio {
  display: flex;
  clear: both;
  align-items: center;
  gap: 13px;
  height: 44px;
  margin-left: 53px;
  color: #b1b2b4;
}

.radio input {
  appearance: none;
  width: 28px;
  height: 28px;
  border: 1px solid #d9dadb;
  border-radius: 50%;
  background: #f3f4f4;
}

.radio input:checked {
  background: radial-gradient(circle, #b5b6b7 6px, #f3f4f4 7px);
}

.footer {
  display: flex;
  align-items: flex-start;
  padding: 42px 0 22px 11px;
}

.unlock {
  position: relative;
  display: flex;
  align-items: flex-end;
  gap: 23px;
  color: #77787a;
}

.unlock > span {
  padding-bottom: 5px;
}

.push--advanced {
  margin: 16px 24px 0 auto;
  background: #f8f9f9;
}

.help {
  width: 40px;
  height: 40px;
  margin-top: 14px;
  border-radius: 50%;
  background: #fff;
  box-shadow: 0 1px 3px #0005;
  font-size: 30px;
  font-weight: 500;
}

.watermark {
  position: absolute;
  right: 13px;
  bottom: 6px;
  color: #8a8b8d;
  font-family: "Noto Sans", "Noto Sans CJK SC", sans-serif;
  font-size: 20px;
  line-height: 24px;
  text-shadow: 1px 1px 0 #fff;
}
```
